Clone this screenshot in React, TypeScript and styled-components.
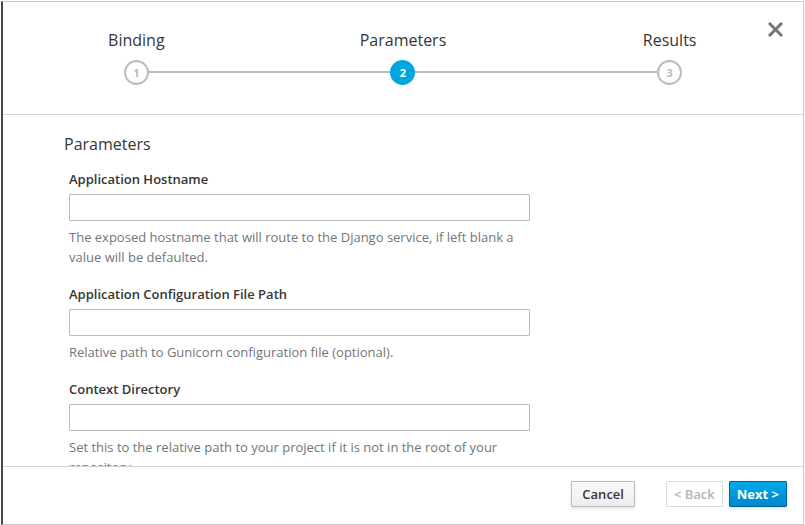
import React from "react";
import styled, { createGlobalStyle } from "styled-components";

const GlobalStyle = createGlobalStyle`
  html, body {
    margin: 0;
    padding: 0;
    background: #fff;
  }
  body {
    font-family: "Open Sans", "Liberation Sans", sans-serif;
    color: #363636;
  }
`;

interface Step {
  label: string;
  num: number;
}

const steps: Step[] = [
  { label: "Binding", num: 1 },
  { label: "Parameters", num: 2 },
  { label: "Results", num: 3 },
];

interface Field {
  label: string;
  help: string;
}

const fields: Field[] = [
  {
    label: "Application Hostname",
    help: "The exposed hostname that will route to the Django service, if left blank a value will be defaulted.",
  },
  {
    label: "Application Configuration File Path",
    help: "Relative path to Gunicorn configuration file (optional).",
  },
  {
    label: "Context Directory",
    help: "Set this to the relative path to your project if it is not in the root of your repository.",
  },
];

const App: React.FC = () => {
  const active = 2;
  return (
    <>
      <GlobalStyle />
      <Modal>
        <Header>
          <Steps>
            {steps.map((s, i) => (
              <StepCol key={s.num}>
                <StepLabel>{s.label}</StepLabel>
                <StepTrack $left={i > 0} $right={i < steps.length - 1}>
                  <StepCircle $active={s.num === active}>{s.num}</StepCircle>
                </StepTrack>
              </StepCol>
            ))}
          </Steps>
          <CloseButton aria-label="Close">
            <svg width="15" height="15" viewBox="0 0 15 15">
              <path d="M2 2 L13 13 M13 2 L2 13" stroke="#72767b" strokeWidth="3" strokeLinecap="square" />
            </svg>
          </CloseButton>
        </Header>
        <Body>
          <Heading>Parameters</Heading>
          <Form>
            {fields.map((f) => (
              <FormGroup key={f.label}>
                <Label>{f.label}</Label>
                <Input type="text" />
                <Help>{f.help}</Help>
              </FormGroup>
            ))}
          </Form>
        </Body>
        <Footer>
          <Button>Cancel</Button>
          <ButtonGroup>
            <Button $compact disabled>&lt; Back</Button>
            <PrimaryButton $compact>Next &gt;</PrimaryButton>
          </ButtonGroup>
        </Footer>
      </Modal>
    </>
  );
};
export default App;

const Modal = styled.div`
  box-sizing: border-box;
  width: 803px;
  height: 524px;
  margin-left: 1px;
  margin-top: 1px;
  display: flex;
  flex-direction: column;
  border: 1px solid #c8c8c8;
  border-left: 2px solid #4a4a4a;
  background: #fff;
  overflow: hidden;
`;

const Header = styled.div`
  position: relative;
  flex: 0 0 112px;
  border-bottom: 1px solid #d1d1d1;
`;

const Steps = styled.div`
  display: grid;
  grid-template-columns: repeat(3, 1fr);
  padding-top: 27px;
`;

const StepCol = styled.div`
  display: flex;
  flex-direction: column;
  align-items: center;
`;

const StepLabel = styled.div`
  font-size: 16px;
  line-height: 22px;
  color: #363636;
`;

const StepTrack = styled.div<{ $left: boolean; $right: boolean }>`
  position: relative;
  width: 100%;
  height: 26px;
  margin-top: 8px;
  display: flex;
  justify-content: center;
  align-items: center;
  &::before,
  &::after {
    content: "";
    position: absolute;
    top: 12px;
    height: 2px;
    width: 50%;
    background: #bbbbbb;
  }
  &::before {
    left: 0;
    display: ${({ $left }) => ($left ? "block" : "none")};
  }
  &::after {
    right: 0;
    display: ${({ $right }) => ($right ? "block" : "none")};
  }
`;

const StepCircle = styled.div<{ $active: boolean }>`
  position: relative;
  z-index: 1;
  box-sizing: border-box;
  width: 25px;
  height: 25px;
  border-radius: 50%;
  display: flex;
  align-items: center;
  justify-content: center;
  font-size: 11px;
  font-weight: 700;
  background: ${({ $active }) => ($active ? "#00a6e0" : "#fff")};
  border: 2px solid ${({ $active }) => ($active ? "#00a6e0" : "#bbbbbb")};
  color: ${({ $active }) => ($active ? "#fff" : "#bbbbbb")};
`;

const CloseButton = styled.button`
  position: absolute;
  top: 20px;
  right: 20px;
  padding: 0;
  border: none;
  background: none;
  line-height: 0;
  cursor: pointer;
`;

const Body = styled.div`
  flex: 1;
  overflow: hidden;
  padding: 19px 0 0 61px;
`;

const Heading = styled.h3`
  margin: 0 0 15px;
  font-size: 16px;
  line-height: 20px;
  font-weight: 400;
  color: #363636;
`;

const Form = styled.div`
  width: 461px;
  margin-left: 5px;
`;

const FormGroup = styled.div`
  margin-bottom: 17px;
`;

const Label = styled.label`
  display: block;
  font-size: 13px;
  line-height: 20px;
  font-weight: 600;
  color: #363636;
  margin-bottom: 5px;
`;

const Input = styled.input`
  display: block;
  box-sizing: border-box;
  width: 100%;
  height: 27px;
  border: 1px solid #bbbbbb;
  border-radius: 1px;
  background: #fff;
  font-family: inherit;
  &:focus {
    outline: none;
    border-color: #0088ce;
  }
`;

const Help = styled.p`
  margin: 6px 0 0;
  font-size: 13px;
  line-height: 20px;
  color: #72767b;
`;

const Footer = styled.div`
  flex: 0 0 58px;
  box-sizing: border-box;
  border-top: 1px solid #d1d1d1;
  display: flex;
  justify-content: flex-end;
  align-items: flex-start;
  padding: 14px 16px 0 0;
  gap: 31px;
`;

const ButtonGroup = styled.div`
  display: flex;
  gap: 6px;
`;

const Button = styled.button<{ $compact?: boolean }>`
  box-sizing: border-box;
  height: 26px;
  padding: 0 ${({ $compact }) => ($compact ? "7px" : "10px")};
  font-family: inherit;
  font-size: 13px;
  font-weight: 600;
  color: #363636;
  border: 1px solid #bbbbbb;
  border-radius: 1px;
  background: linear-gradient(to bottom, #fafafa 0%, #ededed 100%);
  box-shadow: 0 2px 3px rgba(3, 3, 3, 0.1);
  cursor: pointer;
  &:disabled {
    cursor: default;
    color: #b4b4b4;
    background: #fff;
    border-color: #dcdcdc;
    box-shadow: none;
  }
`;

const PrimaryButton = styled(Button)`
  color: #fff;
  font-weight: 700;
  border-color: #00659c;
  background: linear-gradient(to bottom, #00a9e8 0%, #0088ce 100%);
`;
